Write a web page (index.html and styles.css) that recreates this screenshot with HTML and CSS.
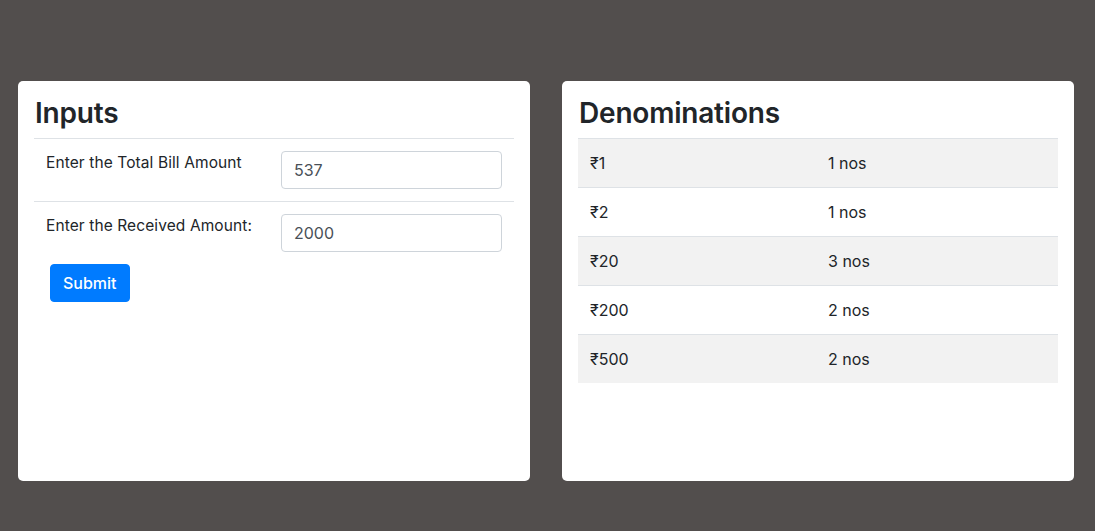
FILE: index.html
```html
<!DOCTYPE html>
<html>
<head>
<meta charset="utf-8">
<link rel="stylesheet" href="styles.css">
</head>
<body>
<div class="page">
  <div class="card">
    <h3 class="title">Inputs</h3>
    <table class="form-table">
      <tr>
        <td class="label-cell">Enter the Total Bill Amount</td>
        <td class="input-cell"><input class="field" type="text" value="537"></td>
      </tr>
      <tr>
        <td class="label-cell">Enter the Received Amount:</td>
        <td class="input-cell"><input class="field" type="text" value="2000"></td>
      </tr>
    </table>
    <div class="actions"><button class="btn">Submit</button></div>
  </div>
  <div class="card">
    <h3 class="title">Denominations</h3>
    <table class="denoms">
      <tr><td>₹1</td><td>1 nos</td></tr>
      <tr><td>₹2</td><td>1 nos</td></tr>
      <tr><td>₹20</td><td>3 nos</td></tr>
      <tr><td>₹200</td><td>2 nos</td></tr>
      <tr><td>₹500</td><td>2 nos</td></tr>
    </table>
  </div>
</div>
</body>
</html>
```
FILE: styles.css
```css
html, body {
  margin: 0;
  padding: 0;
  background: #524e4d;
  font-family: "Inter", "Noto Sans", sans-serif;
  color: #212529;
  font-size: 16px;
  line-height: 24px;
}
.page {
  display: flex;
  gap: 32px;
  padding: 81px 21px 0 18px;
}
.card {
  flex: 1;
  height: 400px;
  box-sizing: border-box;
  background: #fff;
  border-radius: 5px;
  padding: 16px;
}
.title {
  margin: 0 0 8px 0;
  font-size: 28px;
  line-height: 33px;
  font-weight: 600;
  height: 33px;
  padding-left: 1px;
  letter-spacing: -0.2px;
}
table {
  width: 100%;
  border-collapse: collapse;
}
td {
  padding: 12px;
  border-top: 1px solid #dee2e6;
  vertical-align: top;
  text-align: left;
}
.form-table .label-cell {
  width: 211px;
  font-size: 15.5px;
  letter-spacing: 0.1px;
}
.field {
  display: block;
  box-sizing: border-box;
  width: 100%;
  height: 38px;
  padding: 6px 12px;
  border: 1px solid #ced4da;
  border-radius: 4px;
  font-family: inherit;
  font-size: 16px;
  color: #495057;
  background: #fff;
}
.actions {
  padding-left: 16px;
}
.btn {
  background: #007bff;
  color: #fff;
  border: 1px solid #007bff;
  border-radius: 4px;
  height: 38px;
  padding: 6px 12px;
  font-family: inherit;
  font-size: 16px;
  font-weight: 500;
  line-height: 24px;
}
.denoms td:first-child {
  width: 214px;
}
.denoms tr:nth-child(odd) td {
  background: #f2f2f2;
}
```
